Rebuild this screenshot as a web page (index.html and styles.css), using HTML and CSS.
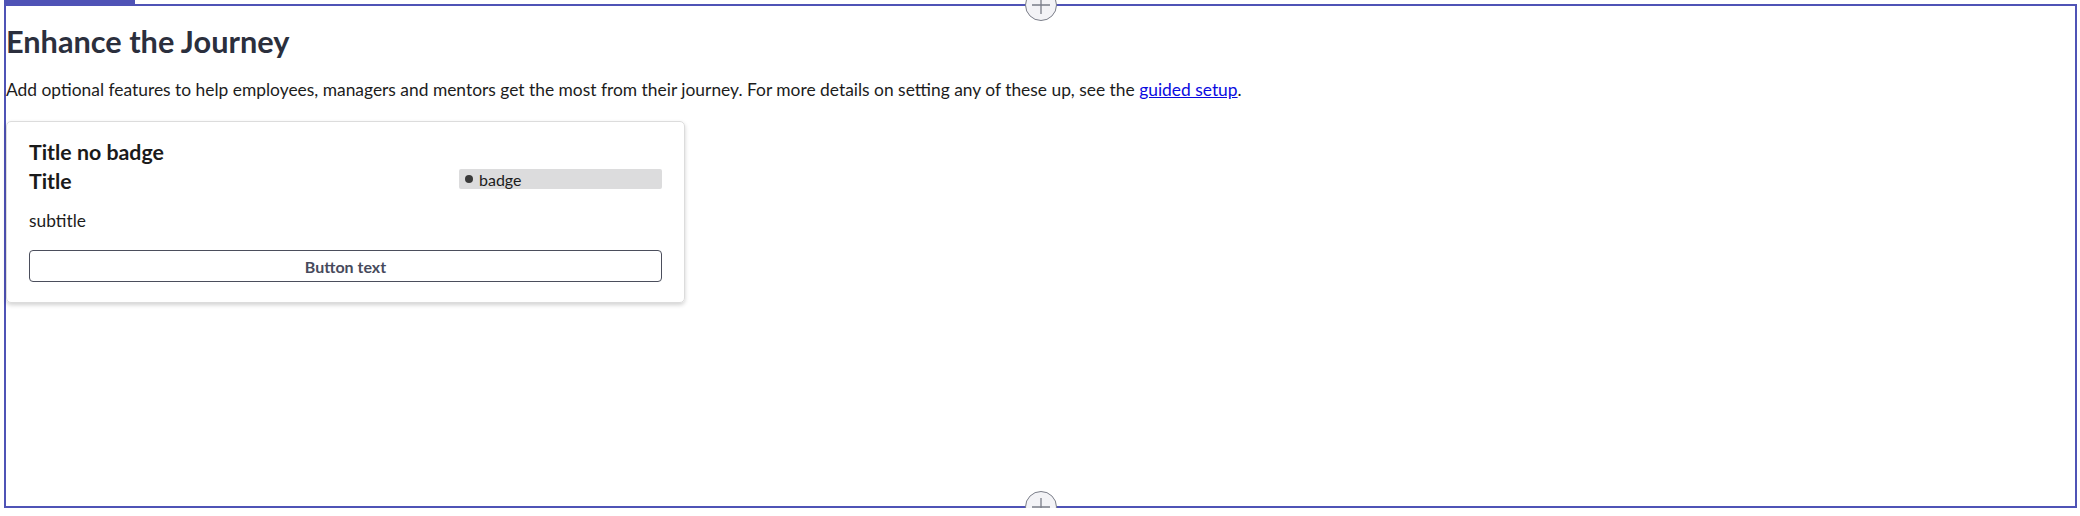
FILE: index.html
```html
<!DOCTYPE html>
<html>
<head>
<meta charset="utf-8">
<link rel="stylesheet" href="styles.css">
</head>
<body>
<div class="frame">
  <div class="tab"></div>
  <button class="add add-top" aria-label="Add section above">
    <svg width="32" height="32" viewBox="0 0 32 32"><circle cx="16" cy="16" r="15.5" fill="#f3f3f6" stroke="#7a7d88" stroke-width="1"/><path d="M16 7v18M7 16h18" stroke="#7a7d88" stroke-width="1.3"/></svg>
  </button>
  <h2 class="title">Enhance the Journey</h2>
  <p class="intro">Add optional features to help employees, managers and mentors get the most from their journey. For more details on setting any of these up, see the <a href="#">guided setup</a>.</p>
  <div class="grid">
    <div class="card">
      <div class="card-title">Title no badge</div>
      <div class="card-row">
        <div class="card-title">Title</div>
        <span class="badge"><span class="dot"></span>badge</span>
      </div>
      <div class="subtitle">subtitle</div>
      <button class="btn">Button text</button>
    </div>
  </div>
  <button class="add add-bottom" aria-label="Add section below">
    <svg width="32" height="32" viewBox="0 0 32 32"><circle cx="16" cy="16" r="15.5" fill="#f3f3f6" stroke="#7a7d88" stroke-width="1"/><path d="M16 7v18M7 16h18" stroke="#7a7d88" stroke-width="1.3"/></svg>
  </button>
</div>
</body>
</html>
```
FILE: styles.css
```css
html, body {
  margin: 0;
  padding: 0;
  background: #ffffff;
}
body {
  font-family: Lato, "Noto Sans", sans-serif;
  color: #1c1c1c;
}
.frame {
  position: relative;
  box-sizing: border-box;
  margin: 4px 3px 0 4px;
  height: 504px;
  border: 2px solid #4f53b6;
}
.tab {
  position: absolute;
  top: -6px;
  left: -2px;
  width: 131px;
  height: 6px;
  background: #4f53b6;
}
.add {
  position: absolute;
  left: 50%;
  margin-left: -16px;
  width: 32px;
  height: 32px;
  padding: 0;
  border: 0;
  background: none;
  line-height: 0;
}
.add-top { top: -17px; }
.add-bottom { bottom: -17px; }
.title {
  margin: 18px 0 0 0;
  font-size: 30.7px;
  line-height: 36px;
  font-weight: 700;
  color: #2b2f3d;
}
.intro {
  margin: 17px 0 0 0;
  font-size: 17.4px;
  line-height: 26px;
}
.intro a {
  color: #0a0ae0;
}
.grid {
  display: grid;
  grid-template-columns: repeat(3, 1fr);
  gap: 16px;
  margin-top: 18px;
}
.card {
  border: 1px solid #dcdcdc;
  border-radius: 5px;
  box-shadow: 0 2px 4px rgba(0,0,0,0.18);
  padding: 16px 22px 20px 22px;
  display: flex;
  flex-direction: column;
}
.card-title {
  font-size: 21.33px;
  line-height: 29px;
  font-weight: 700;
  color: #1a1a1a;
}
.card-row {
  display: flex;
  align-items: center;
  justify-content: space-between;
}
.badge {
  display: flex;
  align-items: center;
  gap: 6px;
  width: 203px;
  box-sizing: border-box;
  height: 20px;
  margin-top: -5px;
  padding: 0 6px;
  background: #dcdcdd;
  border-radius: 2px;
  font-size: 16px;
  color: #1c1c1c;
}
.dot {
  width: 8px;
  height: 8px;
  border-radius: 50%;
  background: #3a3a3a;
}
.subtitle {
  margin-top: 12px;
  font-size: 17.33px;
  line-height: 26px;
}
.btn {
  margin-top: 16px;
  height: 32px;
  border: 1px solid #4b4e5c;
  border-radius: 4px;
  background: #fff;
  font-family: Lato, "Noto Sans", sans-serif;
  font-size: 16px;
  font-weight: 700;
  color: #474a5c;
}
```
